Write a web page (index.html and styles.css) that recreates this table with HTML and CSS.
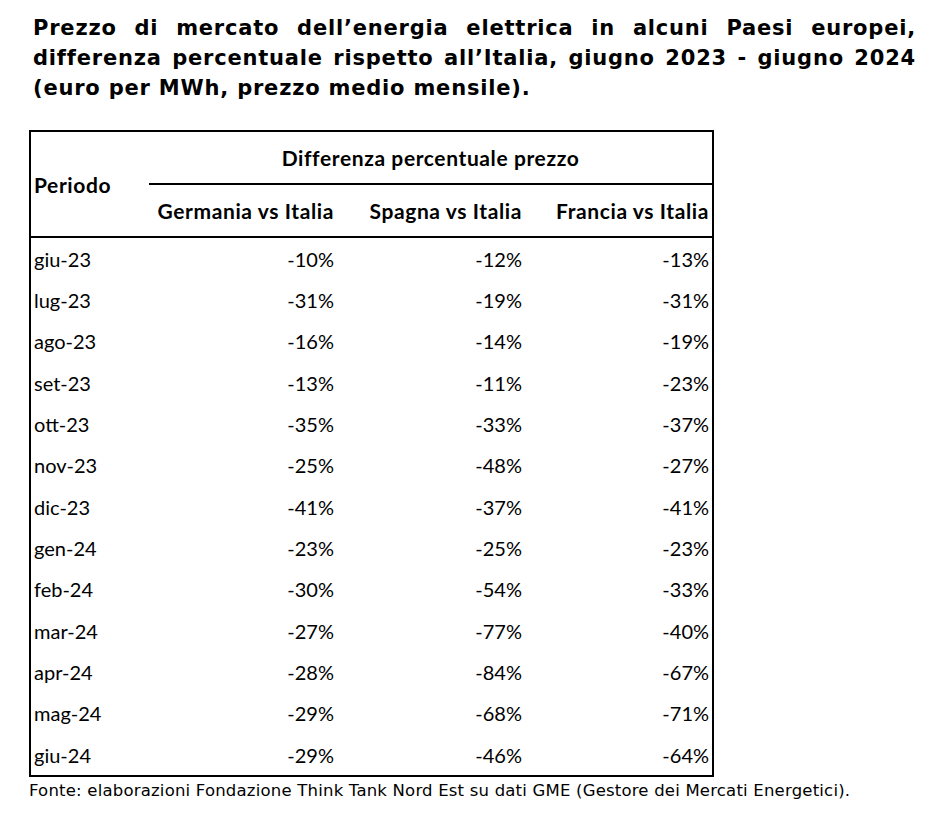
FILE: index.html
```html
<!DOCTYPE html>
<html lang="it">
<head>
<meta charset="utf-8">
<link rel="stylesheet" href="styles.css">
</head>
<body>
<div class="page">
  <h1 class="title">
    <span class="tline tline-j">Prezzo di mercato dell’energia elettrica in alcuni Paesi europei,</span>
    <span class="tline tline-j">differenza percentuale rispetto all’Italia, giugno 2023 - giugno 2024</span>
    <span class="tline">(euro per MWh, prezzo medio mensile).</span>
  </h1>
  <table class="data">
    <colgroup>
      <col class="c-period"><col class="c-num"><col class="c-num"><col class="c-num">
    </colgroup>
    <thead>
      <tr class="h1">
        <th class="period-h" rowspan="2">Periodo</th>
        <th class="group-h" colspan="3">Differenza percentuale prezzo</th>
      </tr>
      <tr class="h2">
        <th class="col-h">Germania vs Italia</th>
        <th class="col-h">Spagna vs Italia</th>
        <th class="col-h">Francia vs Italia</th>
      </tr>
    </thead>
    <tbody>
      <tr><td>giu-23</td><td>-10%</td><td>-12%</td><td>-13%</td></tr>
      <tr><td>lug-23</td><td>-31%</td><td>-19%</td><td>-31%</td></tr>
      <tr><td>ago-23</td><td>-16%</td><td>-14%</td><td>-19%</td></tr>
      <tr><td>set-23</td><td>-13%</td><td>-11%</td><td>-23%</td></tr>
      <tr><td>ott-23</td><td>-35%</td><td>-33%</td><td>-37%</td></tr>
      <tr><td>nov-23</td><td>-25%</td><td>-48%</td><td>-27%</td></tr>
      <tr><td>dic-23</td><td>-41%</td><td>-37%</td><td>-41%</td></tr>
      <tr><td>gen-24</td><td>-23%</td><td>-25%</td><td>-23%</td></tr>
      <tr><td>feb-24</td><td>-30%</td><td>-54%</td><td>-33%</td></tr>
      <tr><td>mar-24</td><td>-27%</td><td>-77%</td><td>-40%</td></tr>
      <tr><td>apr-24</td><td>-28%</td><td>-84%</td><td>-67%</td></tr>
      <tr><td>mag-24</td><td>-29%</td><td>-68%</td><td>-71%</td></tr>
      <tr><td>giu-24</td><td>-29%</td><td>-46%</td><td>-64%</td></tr>
    </tbody>
  </table>
  <p class="source">Fonte: elaborazioni Fondazione Think Tank Nord Est su dati GME (Gestore dei Mercati Energetici).</p>
</div>
</body>
</html>
```

FILE: styles.css
```css
html, body {
  margin: 0;
  padding: 0;
  background: #ffffff;
  color: #000000;
}

.page {
  padding: 13px 0 0 29px;
  width: 887px;
}

.title {
  margin: 0 0 27px 4px;
  font-family: "DejaVu Sans", "Liberation Sans", sans-serif;
  font-weight: bold;
  font-size: 21px;
  letter-spacing: 0.8px;
  line-height: 30px;
}

.tline {
  display: block;
  white-space: nowrap;
}

.tline-j {
  text-align: justify;
  text-align-last: justify;
}

.data {
  border-collapse: collapse;
  border: 2px solid #000;
  width: 684px;
  font-family: Lato, "Open Sans", sans-serif;
  font-size: 20px;
  table-layout: fixed;
}

.c-period { width: 119px; }
.c-num { width: 188px; }

.data th {
  font-weight: bold;
  font-size: 21px;
  letter-spacing: 0.6px;
  padding: 0 3px;
  height: 51px;
  vertical-align: middle;
}

.period-h {
  text-align: left;
  border-bottom: 2px solid #000;
}

.group-h {
  text-align: center;
  border-bottom: 2px solid #000;
}

.col-h {
  text-align: right;
  border-bottom: 2px solid #000;
}

.data td {
  height: 41.35px;
  padding: 0 3px;
  text-align: right;
  vertical-align: middle;
}

.data td:first-child {
  text-align: left;
}

.source {
  margin: 3px 0 0 0;
  font-family: "DejaVu Sans", "Liberation Sans", sans-serif;
  font-size: 16.5px;
  letter-spacing: 0.2px;
  line-height: 22px;
}
```
